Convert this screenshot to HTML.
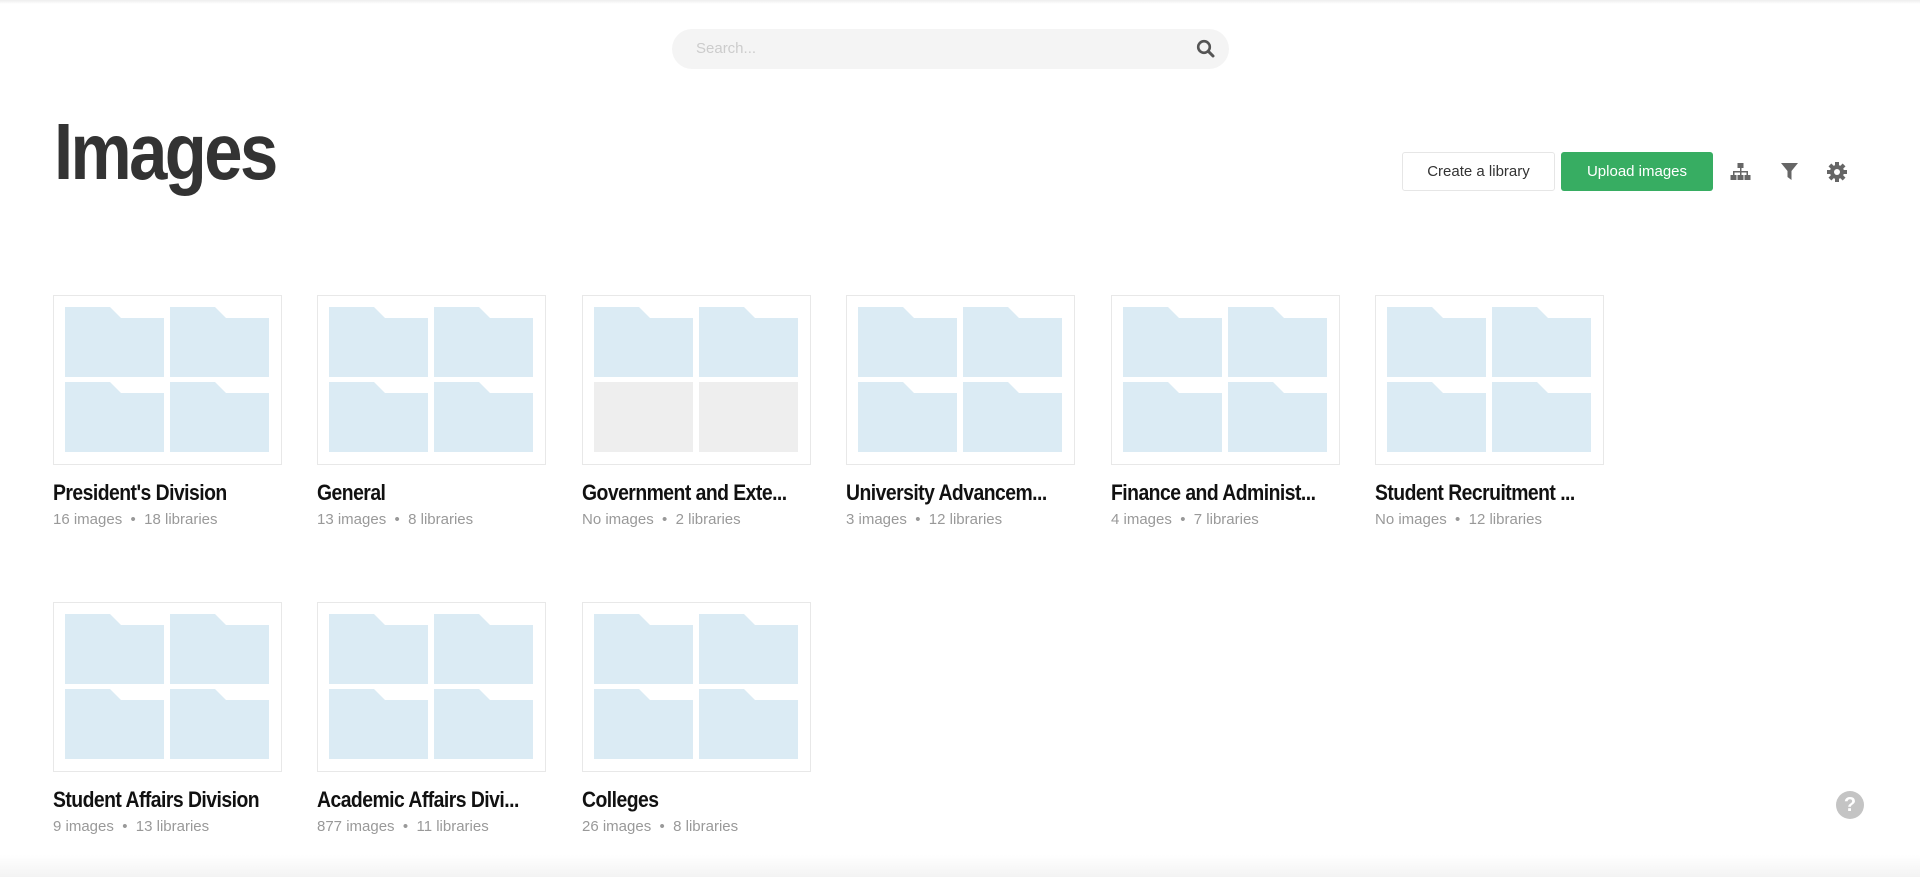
<!DOCTYPE html>
<html><head><meta charset="utf-8"><style>
*{margin:0;padding:0;box-sizing:border-box}
body{width:1920px;height:877px;background:#fff;position:relative;overflow:hidden;font-family:"Liberation Sans",sans-serif}
.topbar{position:absolute;left:0;top:0;width:1920px;height:4px;background:linear-gradient(#eee,#fff)}
.search{position:absolute;left:672px;top:29px;width:557px;height:40px;border-radius:20px;background:#f4f4f4}
.search span{position:absolute;left:24px;top:11px;font-size:15px;color:#ccc}
h1{position:absolute;left:54px;top:106px;font-size:80px;font-weight:bold;color:#333;letter-spacing:-3px;transform:scaleX(.86);transform-origin:left}
.btn{position:absolute;top:152px;height:39px;border-radius:3px;font-size:15px;line-height:39px;text-align:center}
.c{left:1402px;width:153px;border:1px solid #e6e6e6;color:#333;line-height:37px}
.u{left:1561px;width:152px;background:#37ad62;color:#fff}
.card{position:absolute;width:229px}
.th{width:229px;height:170px;border:1px solid #e8e8e8;position:relative}
.t{position:absolute;width:99px;height:70px}
.t svg{display:block}
.n{font-size:22px;font-weight:bold;color:#111;margin-top:15px;letter-spacing:-.6px;white-space:nowrap;transform:scaleX(.88);transform-origin:left}
.s{font-size:15px;color:#999;margin-top:5px}
.help{position:absolute;left:1836px;top:791px;width:28px;height:28px;border-radius:50%;background:#c4c4c4;color:#fff;font-weight:bold;font-size:20px;text-align:center;line-height:28px}
.bot{position:absolute;left:0;top:855px;width:1920px;height:22px;background:linear-gradient(#fff,#f3f3f3)}
</style></head><body>
<div class="topbar"></div>
<div class="search"><span>Search...</span>
<svg style="position:absolute;left:524px;top:10px" width="20" height="20" viewBox="0 0 20 20"><circle cx="8" cy="8" r="5.8" fill="none" stroke="#555" stroke-width="2.6"/><path d="M12.2 12.2L17 17" stroke="#555" stroke-width="3" stroke-linecap="round"/></svg></div>
<h1>Images</h1>
<div class="btn c">Create a library</div>
<div class="btn u">Upload images</div>
<svg style="position:absolute;left:1730px;top:162px" width="21" height="20" viewBox="0 0 21 20" fill="#666"><rect x="7.5" y="1" width="6" height="5"/><rect x="10" y="6" width="1.5" height="4"/><rect x="3" y="9" width="15" height="1.5"/><rect x="3" y="9" width="1.5" height="4"/><rect x="16.5" y="9" width="1.5" height="4"/><rect x="10" y="9" width="1.5" height="4"/><rect x="0.5" y="13" width="6" height="5"/><rect x="7.5" y="13" width="6" height="5"/><rect x="14.5" y="13" width="6" height="5"/></svg>
<svg style="position:absolute;left:1781px;top:163px" width="17" height="18" viewBox="0 0 17 18" fill="#666"><path d="M0 0H17L10.5 8V17L6.5 14V8Z"/></svg>
<svg style="position:absolute;left:1827px;top:162px" width="20" height="20" viewBox="0 0 20 20"><g fill="#666" transform="translate(10 10)"><circle r="7"/><rect x="-2" y="-10" width="4" height="20"/><rect x="-2" y="-10" width="4" height="20" transform="rotate(45)"/><rect x="-2" y="-10" width="4" height="20" transform="rotate(90)"/><rect x="-2" y="-10" width="4" height="20" transform="rotate(135)"/></g><circle cx="10" cy="10" r="3" fill="#fff"/></svg>

<div id="cards"></div>
<div class="help">?</div>
<div class="bot"></div>
<script>
var d=[["President's Division","16 images","18 libraries",4],["General","13 images","8 libraries",4],["Government and Exte...","No images","2 libraries",2],["University Advancem...","3 images","12 libraries",4],["Finance and Administ...","4 images","7 libraries",4],["Student Recruitment ...","No images","12 libraries",4],["Student Affairs Division","9 images","13 libraries",4],["Academic Affairs Divi...","877 images","11 libraries",4],["Colleges","26 images","8 libraries",4]];
var xs=[53,317,582,846,1111,1375];
var fold='<svg width="99" height="70"><path d="M0 0H45L56 11H99V70H0Z" fill="#dbebf4"/></svg>';
var grey='<svg width="99" height="70"><rect width="99" height="70" fill="#eeeeee"/></svg>';
var h='';
d.forEach(function(c,i){var x=xs[i%6],y=i<6?295:602;var tiles='';
[[12,12],[117,12],[12,87],[117,87]].forEach(function(p,j){tiles+='<div class="t" style="left:'+(p[0]-1)+'px;top:'+(p[1]-1)+'px">'+(j<c[3]?fold:grey)+'</div>';});
h+='<div class="card" style="left:'+x+'px;top:'+y+'px"><div class="th">'+tiles+'</div><div class="n">'+c[0]+'</div><div class="s">'+c[1]+' &nbsp;•&nbsp; '+c[2]+'</div></div>';});
document.getElementById('cards').innerHTML=h;
</script>
</body></html>
